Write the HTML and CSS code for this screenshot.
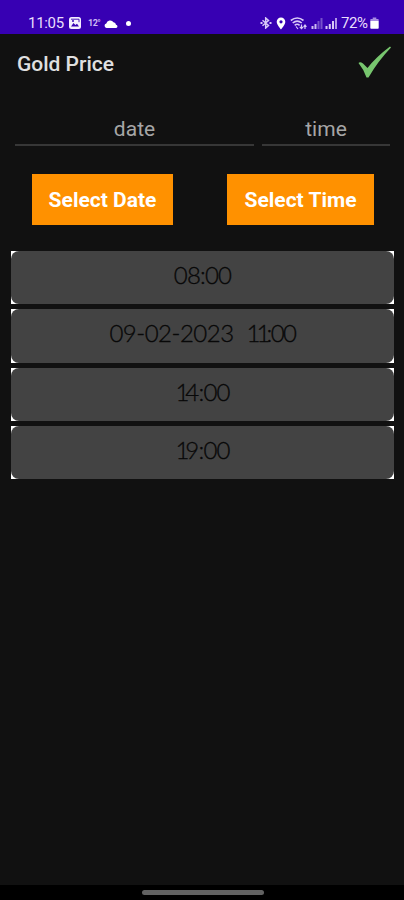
FILE: index.html
```html
<!DOCTYPE html>
<html lang="en">
<head>
<meta charset="utf-8">
<title>Gold Price</title>
<link rel="stylesheet" href="styles.css">
</head>
<body>
<div class="screen">
  <header class="status">
    <span class="clock">11:05</span>
    <svg class="i-photo" width="12" height="12" viewBox="0 0 12 12"><rect width="12" height="12" rx="2.5" fill="#f4edff"/><path d="M2 9.5 4.5 6 6.4 8 8 6.700 10 9.500z" fill="#3700b3"/><path d="M2 2.200h8v3" fill="none" stroke="#3700b3" stroke-width=".9"/><circle cx="4" cy="4" r="1" fill="#3700b3"/></svg>
    <span class="degrees">12°</span>
    <svg class="i-cloud" width="14" height="9" viewBox="0 0 14 9"><path d="M2.500 9A2.300 2.300 0 0 1 2.300 4.500 4 4 0 0 1 9.500 3.200 3 3 0 0 1 12 5.700 1.700 1.700 0 0 1 12.300 9z" fill="#fff"/></svg>
    <span class="dot"></span>
    <div class="signals">
      <svg width="12" height="12" viewBox="0 0 12 12" fill="none" stroke="#d9c9f7" stroke-width="1.5"><path d="M2.500 3.200 8.500 8.500 5.700 11V1l2.800 2.500-6 5.300"/><path d="M.5 6h2M9.500 6h2" stroke-width="2"/></svg>
      <svg class="i-pin" width="10" height="13" viewBox="0 0 10 13"><path d="M5 .5A4.300 4.300 0 0 0 .7 4.800C.7 7.800 5 12.500 5 12.500s4.300-4.700 4.300-7.700A4.300 4.300 0 0 0 5 .5z" fill="#fff"/><circle cx="5" cy="4.800" r="1.600" fill="#3700b3"/></svg>
      <svg class="i-wifi" width="17" height="13" viewBox="0 0 17 13" fill="none" stroke="#d9c9f7" stroke-width="1.600"><path d="M.8 3.500Q7.200-1.400 13.500 3.500M2.700 6Q7.200 2.300 11.700 6M4.700 8.300Q7.200 6.200 9.600 8.300"/><path d="M6 9.500 8 12M11.500 7.500v4M9.800 9.800l1.700 1.900 1.600-1.900M15 12V8M13.600 9.800 15 8l1.400 1.800" stroke-width="1.200"/></svg>
      <svg class="i-bars" width="12" height="12" viewBox="0 0 12 12"><path d="M.5 9h2v3h-2zM3.500 7h2v5h-2z" fill="#cdbbf2"/><path d="M6.500 4h2v8h-2zM9.500 1h2v11h-2z" fill="#7650cb"/></svg>
      <svg class="i-bars2" width="13" height="12" viewBox="0 0 13 12"><path d="M.5 9h2v3h-2zM3.800 7h2v5h-2zM7 4h2v8H7z" fill="#d9c9f7"/><path d="M10 1h2v11h-2z" fill="#b095e7"/></svg>
      <span class="percent">72%</span>
      <svg width="9" height="12" viewBox="0 0 9 12"><path d="M2.700.5h3.600V2H8a.7.7 0 0 1 .7.7V4H.3V2.700A.7.7 0 0 1 1 2h1.700z" fill="#a88be3"/><path d="M.3 4h8.400v7a.8.8 0 0 1-.8.8H1.100a.8.8 0 0 1-.8-.8z" fill="#fff"/></svg>
    </div>
  </header>
  <div class="toolbar">
    <h1>Gold Price</h1>
    <svg width="34" height="33" viewBox="0 0 34 33"><path d="M.5 17Q2 15.500 5 17.500L9.500 22Q18 11 32 .5L33 1.500Q20 15 10.500 31.500L8.500 31.500Q5.500 23 .5 17z" fill="#77c66e"/></svg>
  </div>
  <main>
    <div class="fields">
      <div class="field date">date</div>
      <div class="field time">time</div>
    </div>
    <div class="buttons">
      <button class="pick-date">Select Date</button>
      <button class="pick-time">Select Time</button>
    </div>
    <div class="list">
      <div class="frame"><div class="card">08:00</div></div>
      <div class="frame"><div class="card"><span class="day">09-02-2023</span><span class="hour"><span class="narrow">11</span>:00</span></div></div>
      <div class="frame"><div class="card"><span class="narrow">1</span>4:00</div></div>
      <div class="frame"><div class="card"><span class="narrow">1</span>9:00</div></div>
    </div>
  </main>
  <footer class="navbar"><span class="handle"></span></footer>
</div>
</body>
</html>
```
FILE: styles.css
```css
* { box-sizing: border-box; }
body { margin: 0; background: #111; font-family: Roboto, "Liberation Sans", sans-serif; }
.screen { width: 404px; height: 900px; display: flex; flex-direction: column; overflow: hidden; }
.status { height: 34px; padding: 12px 25px 0 28px; background: #3700b3; color: #e9defc; display: flex; align-items: center; flex: none; }
.status svg { display: block; flex: none; }
.clock { font-size: 15px; line-height: 22px; width: 41px; letter-spacing: -.3px; }
.degrees { font-size: 9px; font-weight: 700; width: 15px; margin-left: 7px; letter-spacing: -.5px; color: #cdbbf2; }
.i-cloud { margin-left: 1px; }
.dot { width: 5px; height: 5px; border-radius: 50%; background: #fff; margin-left: 8px; }
.signals { margin-left: auto; display: flex; align-items: center; }
.signals > :first-child { margin-right: 1px; }
.i-pin { margin-left: 3px; }
.i-wifi { margin-left: 4px; }
.i-bars { margin-left: 4px; }
.i-bars2 { margin-left: 2px; }
.percent { font-size: 15px; line-height: 22px; letter-spacing: -.4px; width: 29px; margin-left: 3px; }
.toolbar { height: 61px; flex: none; display: flex; justify-content: space-between; align-items: center; padding: 0 12px 5px 17px; }
h1 { margin: 4px 0 0; font-size: 21px; font-weight: 500; line-height: 28px; color: #e0e0e0; }
main { flex: 1; padding: 16px 10px 0 11px; }
.fields { display: flex; gap: 8px; padding: 0 4px; }
.field { height: 35px; border-bottom: 2px solid #373737; text-align: center; font-size: 21px; line-height: 36px; color: #a6a6a6; }
.date { width: 239px; }
.time { width: 128px; }
.buttons { display: flex; justify-content: space-between; padding: 28px 20px 0 21px; }
button { height: 51px; border: 0; padding: 0; background: #ff9100; color: #fff; font: 700 21px/53px Roboto, sans-serif; }
.pick-date { width: 141px; }
.pick-time { width: 147px; }
.list { margin-top: 26px; display: grid; gap: 5px; }
.frame { height: 53.300px; background: #fff; }
.card { height: 100%; background: #434343; border-radius: 8px; color: #080808; text-align: center; font: 300 24px/48px Lato, sans-serif; letter-spacing: -.8px; -webkit-text-stroke: .3px #080808; }
.day { letter-spacing: -.5px; }
.hour { margin-left: 13px; letter-spacing: -1.500px; }
.narrow { letter-spacing: -4px; }
.navbar { height: 15px; flex: none; background: #000; display: flex; justify-content: center; padding-top: 5px; }
.handle { width: 122px; height: 5px; margin-left: 1px; border-radius: 3px; background: #626262; }
```
